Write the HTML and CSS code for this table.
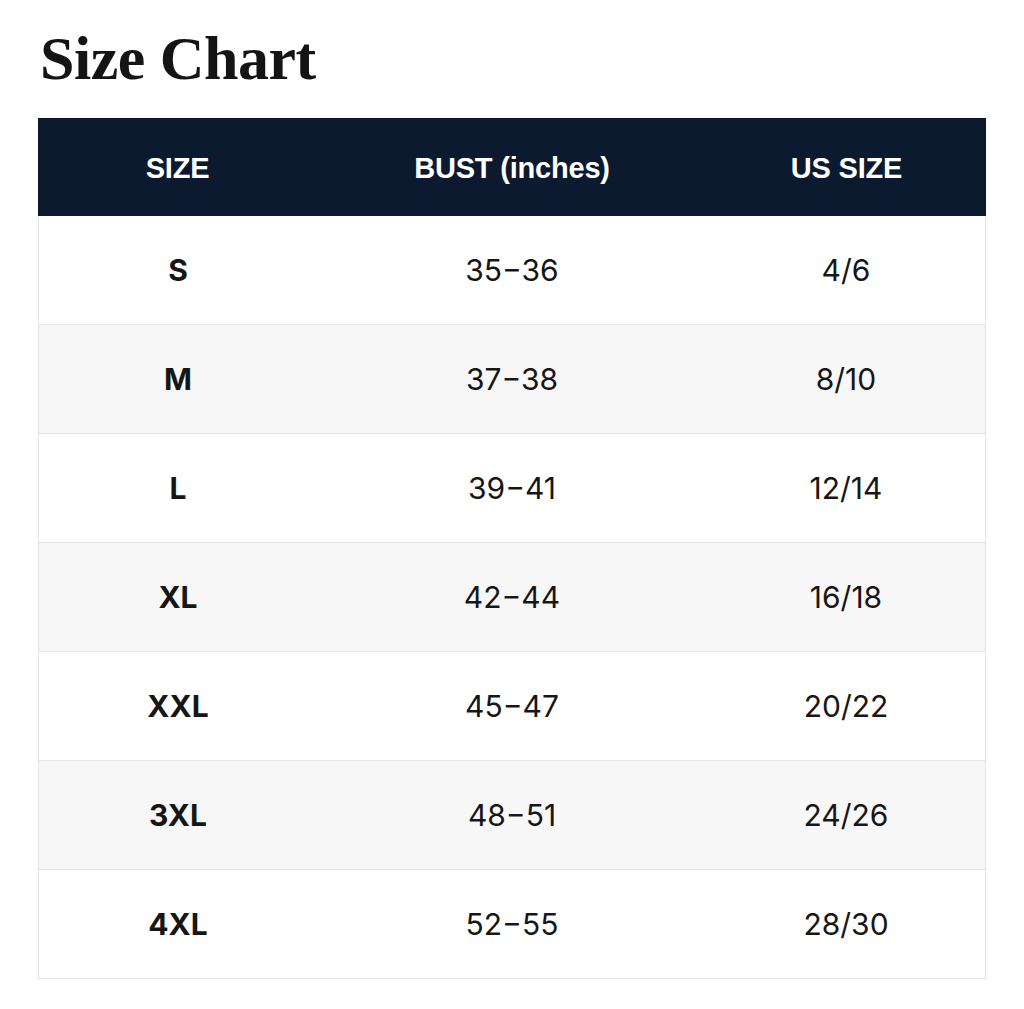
FILE: index.html
```html
<!DOCTYPE html>
<html lang="en">
<head>
<meta charset="utf-8">
<title>Size Chart</title>
<link rel="stylesheet" href="styles.css">
</head>
<body>
<main class="page">
  <h1 class="title">Size Chart</h1>
  <div class="chart">
    <div class="row head">
      <div class="cell">SIZE</div>
      <div class="cell">BUST (inches)</div>
      <div class="cell">US SIZE</div>
    </div>
    <div class="row">
      <div class="cell size">S</div><div class="cell">35−36</div><div class="cell">4/6</div>
    </div>
    <div class="row alt">
      <div class="cell size">M</div><div class="cell">37−38</div><div class="cell">8/10</div>
    </div>
    <div class="row">
      <div class="cell size">L</div><div class="cell">39−41</div><div class="cell">12/14</div>
    </div>
    <div class="row alt">
      <div class="cell size">XL</div><div class="cell">42−44</div><div class="cell">16/18</div>
    </div>
    <div class="row">
      <div class="cell size">XXL</div><div class="cell">45−47</div><div class="cell">20/22</div>
    </div>
    <div class="row alt">
      <div class="cell size">3XL</div><div class="cell">48−51</div><div class="cell">24/26</div>
    </div>
    <div class="row">
      <div class="cell size">4XL</div><div class="cell">52−55</div><div class="cell">28/30</div>
    </div>
  </div>
</main>
</body>
</html>
```

FILE: styles.css
```css
html, body {
  margin: 0;
  padding: 0;
  background: #ffffff;
}

.page {
  padding: 27px 38px 0 38px;
}

.title {
  margin: 0 0 29px 2px;
  font-family: "Liberation Serif", "Times New Roman", serif;
  font-weight: 700;
  font-size: 62px;
  line-height: 62px;
  color: #141414;
  letter-spacing: -0.5px;
}

.chart {
  width: 948px;
  border: 1px solid #e4e4e4;
  border-top: none;
  box-sizing: border-box;
  font-family: "Inter", "Liberation Sans", sans-serif;
  color: #161616;
}

.row {
  display: grid;
  grid-template-columns: 278px 390px 1fr;
  height: 109px;
  border-bottom: 1px solid #e6e6e6;
  box-sizing: border-box;
  background: #ffffff;
}

.row:last-child {
  border-bottom: none;
  height: 108px;
}

.row.alt {
  background: #f7f7f7;
}

.row.head {
  grid-template-columns: 279px 390px 1fr;
  height: 98px;
  background: #0b1a2e;
  color: #ffffff;
  border-bottom: none;
  margin: 0 -1px;
}

.cell {
  display: flex;
  align-items: center;
  justify-content: center;
  font-size: 30px;
  font-weight: 400;
}

.head .cell {
  font-family: "Liberation Sans", Arial, sans-serif;
  font-size: 29px;
  font-weight: 700;
  letter-spacing: -0.2px;
  padding-top: 2px;
}

.cell.size {
  font-weight: 700;
}
```
